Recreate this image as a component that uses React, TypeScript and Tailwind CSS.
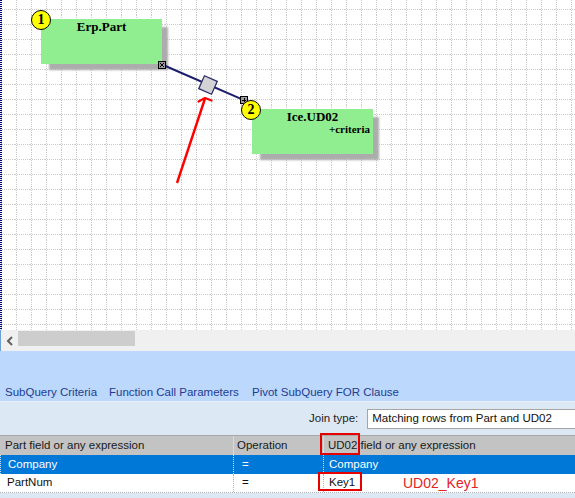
import React from "react";

const ui = { fontFamily: '"Liberation Sans", Arial, sans-serif' };
const serif = { fontFamily: '"Liberation Serif", "Times New Roman", serif' };

function Badge({ n, className }: { n: number; className: string }) {
  return (
    <div
      className={`absolute w-[20px] h-[20px] rounded-full bg-[#ffff00] border border-black flex items-center justify-center text-[14px] font-bold leading-none text-black ${className}`}
      style={serif}
    >
      {n}
    </div>
  );
}

function TableNode({
  title,
  sub,
  className,
}: {
  title: string;
  sub?: string;
  className: string;
}) {
  return (
    <div
      className={`absolute w-[121px] h-[45px] bg-[#90ee90] shadow-[7px_7px_2px_-1px_#acacac] flex flex-col ${className}`}
      style={serif}
    >
      <div className="text-center text-[13px] font-bold leading-[16px] text-black">{title}</div>
      {sub && (
        <div className="text-right pr-[3px] -mt-[2px] text-[11px] font-bold leading-[13px] text-black">
          {sub}
        </div>
      )}
    </div>
  );
}

function Canvas() {
  return (
    <div className="relative h-[330px] bg-white overflow-hidden">
      <svg className="absolute inset-0" width={575} height={330} shapeRendering="crispEdges">
        <defs>
          <pattern id="grid" width={15} height={15} patternUnits="userSpaceOnUse">
            <line x1={1.5} y1={0} x2={1.5} y2={15} stroke="#cacaca" strokeDasharray="1 1" />
            <line x1={0} y1={9.5} x2={15} y2={9.5} stroke="#cacaca" strokeDasharray="1 1" />
          </pattern>
        </defs>
        <rect width={575} height={330} fill="url(#grid)" />
        <line x1={1} y1={0} x2={1} y2={330} stroke="#000080" strokeWidth={2} strokeDasharray="1 1" />
      </svg>

      <TableNode title="Erp.Part" className="left-[41px] top-[19px]" />
      <TableNode title="Ice.UD02" sub="+criteria" className="left-[252px] top-[109px]" />

      {/* join link, diamond and the red pointer */}
      <svg className="absolute inset-0" width={575} height={330}>
        <line x1={162} y1={64.5} x2={244.5} y2={100.3} stroke="#1c1c6c" strokeWidth={2} />
        <rect
          x={201}
          y={78}
          width={14}
          height={14}
          transform="rotate(24 208 85)"
          fill="#d3d3d3"
          stroke="#2a2a6e"
          strokeWidth={1.3}
        />
        <g shapeRendering="crispEdges">
          <rect x={158.5} y={61.5} width={7} height={7} fill="#9c9c9c" stroke="#000" />
          <path d="M160 63 L164 67 M164 63 L160 67" stroke="#000" strokeWidth={1} />
          <rect x={240.5} y={96.5} width={7} height={7} fill="#9c9c9c" stroke="#000" />
          <path d="M244 98 L244 102 M242 100 L246 100" stroke="#000" strokeWidth={1} />
        </g>
        <line x1={177} y1={183} x2={205} y2={98.5} stroke="#ff0000" strokeWidth={2.4} />
        <polyline
          points="198.5,101.5 205,98 211.5,100.5"
          fill="none"
          stroke="#ff0000"
          strokeWidth={2.2}
          strokeLinecap="round"
          strokeLinejoin="round"
        />
      </svg>

      <Badge n={1} className="left-[31px] top-[10px]" />
      <Badge n={2} className="left-[241px] top-[100px]" />
    </div>
  );
}

function ScrollBar() {
  return (
    <div className="h-[21px] bg-[#f0f0f0] border-l border-[#6a9fd8] flex items-center">
      <div className="w-[17px] flex justify-center">
        <svg width={8} height={10} viewBox="0 0 8 10">
          <path d="M6 1 L2 5 L6 9" fill="none" stroke="#606060" strokeWidth={2} />
        </svg>
      </div>
      <div className="w-[117px] h-[15px] bg-[#cdcdcd] self-start mt-[1px]" />
    </div>
  );
}

export default function App() {
  return (
    <div className="w-[575px] h-[498px] overflow-hidden flex flex-col bg-[#dde8f5]" style={ui}>
      <Canvas />
      <ScrollBar />

      <div className="h-[51px] bg-[#bcd8fc] flex items-end pl-[5px] pb-[2px] text-[11.5px] leading-[14px] text-[#1f3c8f] border-b border-[#e9f0fa]">
        <span className="w-[104px]">SubQuery Criteria</span>
        <span className="w-[143px]">Function Call Parameters</span>
        <span>Pivot SubQuery FOR Clause</span>
      </div>

      <div className="h-[33px] flex items-center pl-[309px] text-[11.5px] text-[#222]">
        <span>Join type:</span>
        <div className="ml-[9px] h-[20px] flex-1 -mr-[6px] bg-white border border-[#a5a5a5] flex items-center pl-[4px] text-[#111]">
          Matching rows from Part and UD02
        </div>
      </div>

      <div className="text-[11.5px]">
        <div className="h-[20px] grid grid-cols-[234px_90px_1fr] bg-[#c3c3c3] border-t border-[#a8a8a8] text-[#1a1a1a]">
          <div className="pl-[5px] flex items-center border-r border-[#dadada]">Part field or any expression</div>
          <div className="pl-[3px] flex items-center border-r border-[#dadada]">Operation</div>
          <div className="relative pl-[4px] flex items-center">
            UD02 field or any expression
            <div className="absolute left-[-4px] top-[-3px] w-[40px] h-[22px] border-2 border-[#e60000]" />
          </div>
        </div>

        <div className="h-[19px] grid grid-cols-[234px_90px_1fr] bg-[#0078d7] text-white">
          <div className="pl-[7px] flex items-center border-l border-dotted border-[#cfe4f7] border-r">Company</div>
          <div className="pl-[8px] flex items-center border-r border-dotted border-[#cfe4f7]">=</div>
          <div className="pl-[5px] flex items-center">Company</div>
        </div>

        <div className="h-[19px] grid grid-cols-[234px_90px_1fr] bg-white text-[#111] border-b border-dotted border-[#b0b0b0]">
          <div className="pl-[7px] flex items-center border-r border-dotted border-[#b0b0b0]">PartNum</div>
          <div className="pl-[8px] flex items-center border-r border-dotted border-[#b0b0b0]">=</div>
          <div className="relative pl-[5px] flex items-center">
            Key1
            <div className="absolute left-[-6px] top-[-2px] w-[44px] h-[19px] border-2 border-[#e60000]" />
            <span className="absolute left-[79px] top-[0px] leading-[19px] text-[14px] text-[#e52222]">UD02_Key1</span>
          </div>
        </div>
      </div>
    </div>
  );
}
